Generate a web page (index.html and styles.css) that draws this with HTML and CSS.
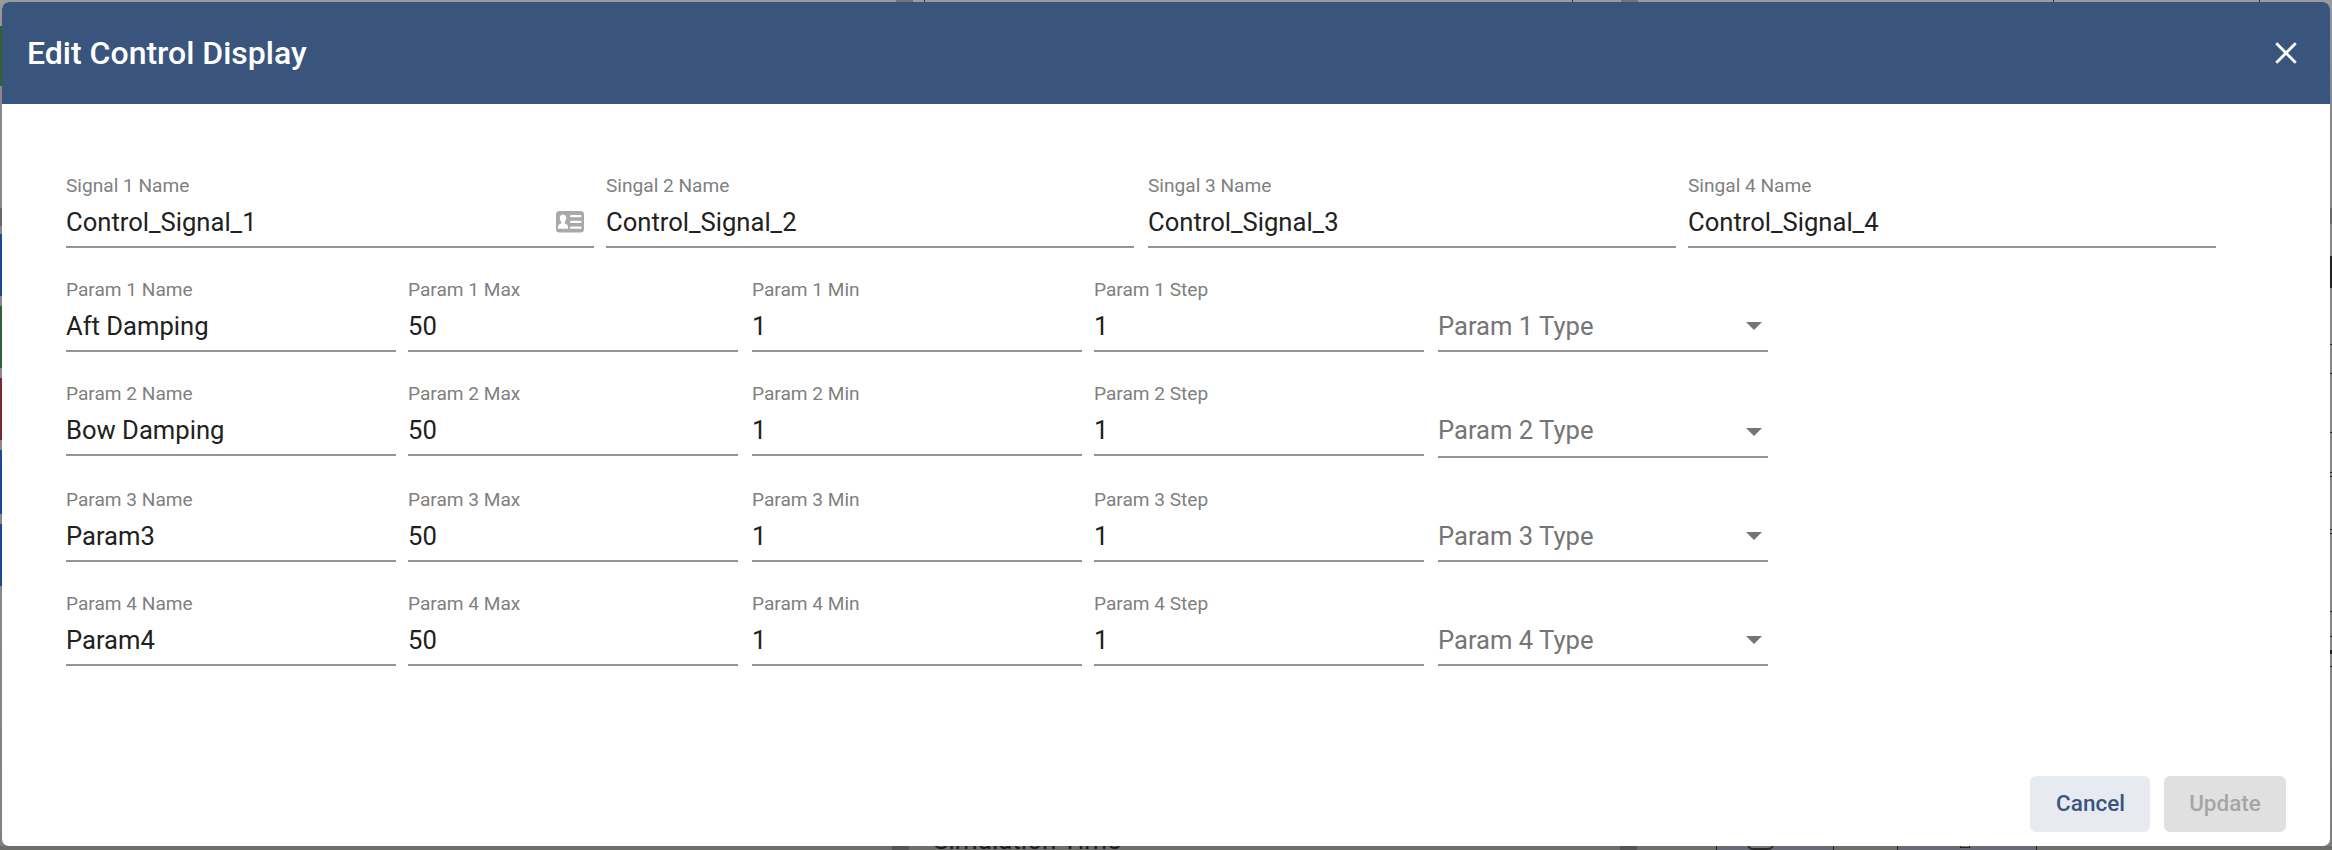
FILE: index.html
```html
<!DOCTYPE html>
<html lang="en">
<head>
<meta charset="utf-8">
<title>Edit Control Display</title>
<link rel="stylesheet" href="styles.css">
</head>
<body>
<div class="backdrop" aria-hidden="true">
<i class="chip green" style="top:26px;height:60px"></i>
<i class="chip dark" style="top:208px;height:18px"></i>
<i class="chip blue" style="top:234px;height:62px"></i>
<i class="chip green" style="top:306px;height:62px"></i>
<i class="chip red" style="top:378px;height:62px"></i>
<i class="chip blue" style="top:450px;height:64px"></i>
<i class="chip blue" style="top:524px;height:62px"></i>
<i class="edge" style="top:208px;height:16px;background:#666"></i>
<i class="edge" style="top:256px;height:32px"></i>
<i class="edge" style="top:344px"></i>
<i class="edge" style="top:373px"></i>
<i class="edge" style="top:432px"></i>
<i class="edge" style="top:472px"></i>
<i class="edge" style="top:476px"></i>
<i class="edge" style="top:529px"></i>
<i class="edge" style="top:533px"></i>
<i class="edge" style="top:611px"></i>
<i class="edge" style="top:636px"></i>
<i class="edge" style="top:650px;height:4px"></i>
<i class="edge" style="top:666px"></i>
<i class="gutter" style="left:896px"></i>
<i class="gutter" style="left:1621px"></i>
<i class="tick" style="left:924px"></i>
<i class="tick" style="left:1572px"></i>
<i class="tick" style="left:2053px"></i>
<i class="tick" style="left:2259px"></i>
<div class="footer-strip"><i class="gutter" style="left:892px"></i><i class="gutter" style="left:1620px"></i><i class="panel" style="left:1716px;width:118px"></i><i class="panel" style="left:1897px;width:140px"></i><i class="pill"></i><i class="square"></i><span class="under">Simulation Time</span></div>
</div>
<main class="dialog">
<header class="header">
<h1 class="title">Edit Control Display</h1>
<svg class="close" viewBox="0 0 22 22"><path d="M1.300 1.300 20.700 20.700M20.700 1.300 1.300 20.700"/></svg>
</header>
<section class="form">
<div class="row signals">
<div class="field"><label>Signal 1 Name</label><div class="value">Control_Signal_1<svg class="card" viewBox="0 0 28 22"><rect width="28" height="21.500" rx="3.500" fill="#a9a9a9"/><g fill="#fff"><ellipse cx="7" cy="7.300" rx="3.200" ry="3.700"/><path d="M5.300 10h3.400v2.500c2 .5 3.300 1.500 3.300 3.200v2H2v-2c0-1.700 1.300-2.700 3.300-3.200z"/><rect x="14" y="4" width="11.500" height="2.200" rx="1"/><rect x="14" y="9.700" width="11.500" height="2.200" rx="1"/><rect x="14" y="15.500" width="11.500" height="2.200" rx="1"/></g></svg></div></div>
<div class="field"><label>Singal 2 Name</label><div class="value">Control_Signal_2</div></div>
<div class="field"><label>Singal 3 Name</label><div class="value">Control_Signal_3</div></div>
<div class="field"><label>Singal 4 Name</label><div class="value">Control_Signal_4</div></div>
</div>
<div class="row params">
<div class="field"><label>Param 1 Name</label><div class="value">Aft Damping</div></div>
<div class="field"><label>Param 1 Max</label><div class="value">50</div></div>
<div class="field"><label>Param 1 Min</label><div class="value">1</div></div>
<div class="field"><label>Param 1 Step</label><div class="value">1</div></div>
<div class="field select"><div class="value">Param 1 Type<i class="arrow"></i></div></div>
</div>
<div class="row params second">
<div class="field"><label>Param 2 Name</label><div class="value">Bow Damping</div></div>
<div class="field"><label>Param 2 Max</label><div class="value">50</div></div>
<div class="field"><label>Param 2 Min</label><div class="value">1</div></div>
<div class="field"><label>Param 2 Step</label><div class="value">1</div></div>
<div class="field select"><div class="value">Param 2 Type<i class="arrow"></i></div></div>
</div>
<div class="row params">
<div class="field"><label>Param 3 Name</label><div class="value">Param3</div></div>
<div class="field"><label>Param 3 Max</label><div class="value">50</div></div>
<div class="field"><label>Param 3 Min</label><div class="value">1</div></div>
<div class="field"><label>Param 3 Step</label><div class="value">1</div></div>
<div class="field select"><div class="value">Param 3 Type<i class="arrow"></i></div></div>
</div>
<div class="row params">
<div class="field"><label>Param 4 Name</label><div class="value">Param4</div></div>
<div class="field"><label>Param 4 Max</label><div class="value">50</div></div>
<div class="field"><label>Param 4 Min</label><div class="value">1</div></div>
<div class="field"><label>Param 4 Step</label><div class="value">1</div></div>
<div class="field select"><div class="value">Param 4 Type<i class="arrow"></i></div></div>
</div>
</section>
<footer class="actions">
<button class="btn cancel">Cancel</button>
<button class="btn update" disabled>Update</button>
</footer>
</main>
</body>
</html>
```
FILE: styles.css
```css
* { box-sizing: border-box; }
body { margin: 0; width: 2332px; height: 850px; padding: 2px 2px 4px; overflow: hidden; position: relative; background: #8e8e8e; font-family: Roboto, "Liberation Sans", sans-serif; }
.backdrop { position: absolute; inset: 0; overflow: hidden; background: linear-gradient(#9b9b9b, #888 12%, #888 70%, #808080); }
.backdrop i { position: absolute; }
.chip { left: 0; width: 3px; }
.green { background: #2f6132; }
.dark { background: #666; }
.blue { background: #1f4796; }
.red { background: #7c262e; }
.edge { right: 0; width: 2px; height: 1px; background: #222; }
.gutter { top: 0; width: 17px; height: 4px; background: #737373; }
.tick { top: 0; width: 1px; height: 2px; background: #333; }
.footer-strip { position: absolute; left: 0; right: 0; bottom: 0; height: 4px; overflow: hidden; background: #6e6e6d; }
.footer-strip .gutter { background: #545454; }
.panel { top: 0; height: 4px; background: #686b77; border: solid #222; border-width: 0 1px; }
.pill { left: 1747px; bottom: 0; width: 27px; height: 12px; border: 2px solid #2b2b2b; border-radius: 7px; background: #777; }
.square { left: 1960px; bottom: 2px; width: 10px; height: 10px; border: 1px solid #222; background: #777; }
.under { position: absolute; left: 933px; bottom: -3px; font-size: 26px; line-height: 26px; color: #1c1c1c; white-space: nowrap; }
.dialog { position: relative; display: flex; flex-direction: column; height: 844px; overflow: hidden; background: #fff; border-radius: 7px; }
.header { display: flex; align-items: center; justify-content: space-between; height: 102px; padding: 0 33px 0 25px; background: #3a557d; color: #fff; }
.title { margin: 0; font-size: 32px; line-height: 40px; font-weight: 500; }
.close { width: 22px; height: 22px; fill: none; stroke: #fff; stroke-width: 2.8; }
.form { flex: 1; padding: 64px 0 0 64px; }
.row { display: grid; height: 104px; align-items: start; }
.signals { grid-template-columns: 540px 542px 540px 528px; }
.signals .field { width: 528px; }
.params { grid-template-columns: 342px 344px 342px 344px 330px; }
.params .field { width: 330px; }
.second { height: 106px; }
.field { height: 80px; border-bottom: 2px solid #949494; color: #212121; }
.field label { display: block; padding-top: 6px; height: 31px; font-size: 19.100px; line-height: 24px; color: #808080; white-space: nowrap; }
.value { display: flex; align-items: center; justify-content: space-between; height: 47px; padding: 0 10px 1px 0; font-size: 25.600px; line-height: 30px; white-space: nowrap; }
.card { width: 28px; height: 22px; }
.select { padding-top: 31px; }
.select .value { color: #757575; padding-right: 6px; }
.second .select { height: 82px; }
.arrow { width: 16px; height: 8px; background: #757575; clip-path: polygon(0 0, 100% 0, 50% 100%); }
.second .arrow { margin-top: 4px; }
.actions { display: flex; justify-content: flex-end; gap: 14px; padding: 0 44px 14px 0; }
.btn { height: 56px; padding: 0 0 3px; border: 0; border-radius: 6px; font: 500 22.500px/30px Roboto, sans-serif; }
.cancel { width: 120px; padding-left: 1px; background: #e7ebf1; color: #3a557d; }
.update { width: 122px; background: #e0e0e0; color: #a6a6a6; }
```
